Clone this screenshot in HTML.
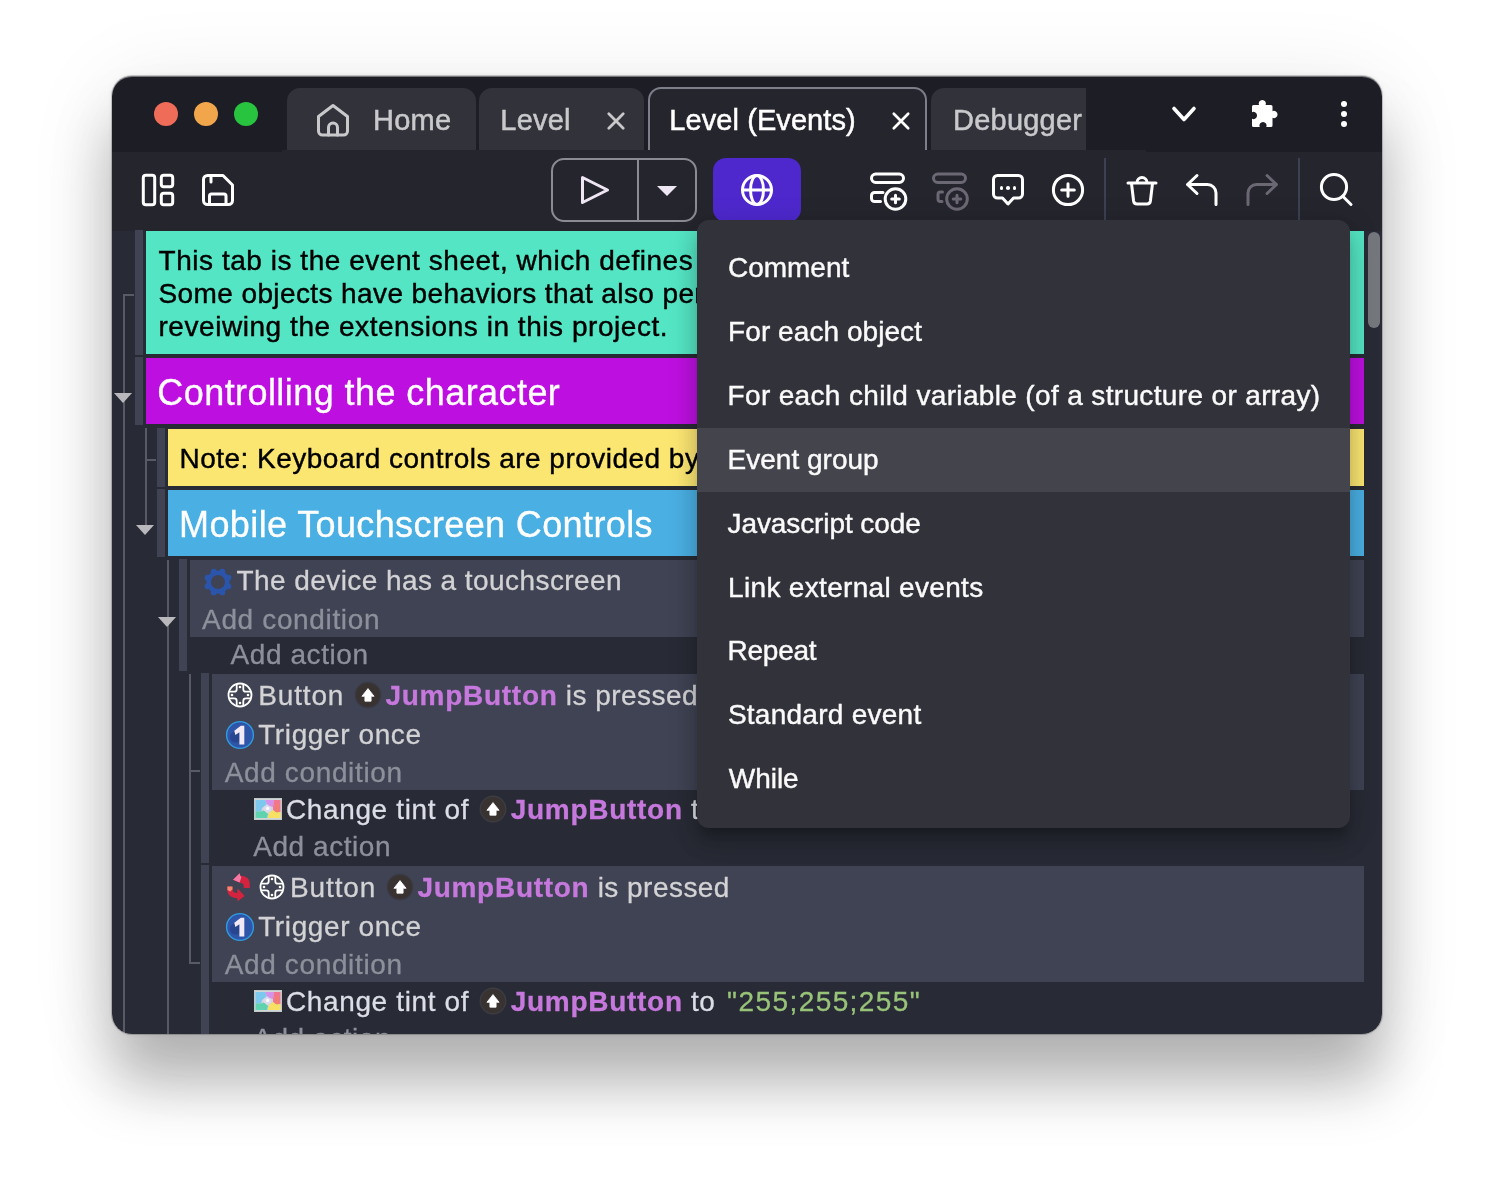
<!DOCTYPE html>
<html><head><meta charset="utf-8"><title>GDevelop</title>
<style>
*{box-sizing:border-box;margin:0;padding:0}
html,body{width:1494px;height:1182px;background:#fff;overflow:hidden}
body{font-family:"Liberation Sans",sans-serif;position:relative}
.shadow{position:absolute;left:112px;top:76px;width:1270px;height:958px;border-radius:20px;
 box-shadow:0 0 0 1px rgba(0,0,0,.18),0 50px 60px rgba(0,0,0,.27),0 10px 90px rgba(0,0,0,.09),0 0 5px rgba(0,0,0,.08)}
.win{position:absolute;left:0;top:0;width:1494px;height:1182px;clip-path:inset(76px 112px 148px 112px round 20px);background:#282b35}
.win{will-change:transform}
.win div,.win svg{position:absolute}
.t,.tt{-webkit-text-stroke:.3px currentColor}
.mi{-webkit-text-stroke:.42px currentColor}
.tt{-webkit-text-stroke:.5px currentColor}
.tab{background:#32323b;border-radius:13px 13px 0 0;color:#c9c9cc}
.tab.active{background:#25252e;border:2px solid #7c7e89;border-bottom:none;color:#fff}
.tt{font-size:28px;line-height:40px;height:40px;white-space:nowrap;color:#c8c8cb;letter-spacing:.2px}
.light{width:24px;height:24px;border-radius:50%}
.handle{background:#3f4354;width:8px}
.vl{background:#585b66;width:1.5px}
.hl{background:#585b66;height:1.5px}
.tri{width:0;height:0;border-left:9.5px solid transparent;border-right:9.5px solid transparent;border-top:10px solid #b9b9bd}
.t{white-space:nowrap;font-size:28px;letter-spacing:.46px;line-height:34px;height:34px;color:#d3d3d5}
.t.dim{color:#8d909b}
.t b{color:#c678dd;font-weight:bold;letter-spacing:.72px}
.t .str{color:#98c379;letter-spacing:1.42px;margin-left:3.6px}
.cond{background:#3f4353}
.menu{background:#32323b;border-radius:12px;box-shadow:0 10px 10px -6px rgba(0,0,0,.2),0 16px 20px 2px rgba(0,0,0,.14),0 6px 28px 4px rgba(0,0,0,.12)}
.mi{height:64px;line-height:64px;font-size:28px;color:#fafafa;white-space:nowrap}
.mi.hov{background:#44444d}
</style></head><body>
<div class="shadow"></div>
<div class="win">
<div class="" style="left:112px;top:76px;width:1270px;height:75.5px;background:#1d1d26"></div>
<div class="" style="left:112px;top:151.5px;width:1270px;height:79px;background:#25252e"></div>
<div class="" style="left:282px;top:149.8px;width:864px;height:2.2px;background:#25252e"></div>
<div class="light" style="left:154px;top:102px;width:24px;height:24px;background:#ee6c58"></div>
<div class="light" style="left:194px;top:102px;width:24px;height:24px;background:#f2a64b"></div>
<div class="light" style="left:234px;top:102px;width:24px;height:24px;background:#28c43f"></div>
<div class="tab" style="left:287px;top:88px;width:188.5px;height:62px;"></div>
<svg style="left:314px;top:101px" width="38" height="38" viewBox="0 0 38 38" fill="none" stroke="#c9c9cc" stroke-width="3" stroke-linejoin="round" stroke-linecap="round"><path d="M4.5 15.5 L19 4.5 L33.5 15.5 V30 a4 4 0 0 1 -4 4 H8.5 a4 4 0 0 1 -4 -4 Z"/><path d="M14.5 34 V26.5 a4.5 4.5 0 0 1 9 0 V34"/></svg>
<div class="tt" style="left:373.1px;top:99.7515px;font-size:29px;color:#c9c9cc">Home</div>
<div class="tab" style="left:479px;top:88px;width:164.5px;height:62px;"></div>
<div class="tt" style="left:500.3px;top:99.7515px;font-size:29px;color:#c9c9cc">Level</div>
<svg style="left:606px;top:111px" width="20" height="20" viewBox="0 0 20 20" stroke="#c9c9cc" stroke-width="2.7" stroke-linecap="round"><path d="M2.8 2.8 L17.2 17.2 M17.2 2.8 L2.8 17.2"/></svg>
<div class="tab active" style="left:647.5px;top:87.4px;width:279.5px;height:62.8px;"></div>
<div class="tt" style="left:669.3px;top:99.7515px;font-size:29px;color:#fff;letter-spacing:.08px">Level (Events)</div>
<svg style="left:891px;top:110.5px" width="20" height="20" viewBox="0 0 20 20" stroke="#fff" stroke-width="2.7" stroke-linecap="round"><path d="M2.8 2.8 L17.2 17.2 M17.2 2.8 L2.8 17.2"/></svg>
<div class="tab" style="left:931px;top:88px;width:155px;height:62px;border-radius:13px 0 0 0"></div>
<div class="" style="left:953.1px;top:88px;width:132.9px;height:62px;overflow:hidden"><div class="tt" style="left:0;top:11.7515px;font-size:29px;color:#c9c9cc">Debugger</div></div>
<svg style="left:1168px;top:100px" width="32" height="28" viewBox="0 0 32 28" fill="none" stroke="#fff" stroke-width="3.6" stroke-linecap="round" stroke-linejoin="round"><path d="M6 8.5 L16 19.5 L26 8.5"/></svg>
<svg style="left:1248px;top:97px" width="32" height="32" viewBox="0 0 32 32" fill="#fff"><path d="M4 9.5 a1.5 1.5 0 0 1 1.5 -1.5 H11 a3.6 3.6 0 1 1 6.6 0 H23 a1.5 1.5 0 0 1 1.5 1.5 V14.2 a3.6 3.6 0 1 1 0 6.6 V28.5 a1.5 1.5 0 0 1 -1.5 1.5 H18.3 a3.6 3.6 0 1 0 -6.6 0 H5.5 a1.5 1.5 0 0 1 -1.5 -1.5 V21.8 a3.6 3.6 0 1 0 0 -6.6 Z"/></svg>
<div class="" style="left:1340.7px;top:100.7px;width:6.6px;height:6.6px;background:#fff;border-radius:50%"></div>
<div class="" style="left:1340.7px;top:110.7px;width:6.6px;height:6.6px;background:#fff;border-radius:50%"></div>
<div class="" style="left:1340.7px;top:120.7px;width:6.6px;height:6.6px;background:#fff;border-radius:50%"></div>
<svg style="left:140px;top:172px" width="36" height="36" viewBox="0 0 36 36" fill="none" stroke="#ffffff" stroke-width="3" stroke-linecap="round" stroke-linejoin="round" ><rect x="3.3" y="3.3" width="11.4" height="29.4" rx="2.5"/><rect x="21.3" y="3.3" width="11.4" height="11.4" rx="2.5"/><rect x="21.3" y="21.3" width="11.4" height="11.4" rx="2.5"/></svg>
<svg style="left:200px;top:172px" width="36" height="36" viewBox="0 0 36 36" fill="none" stroke="#ffffff" stroke-width="3" stroke-linecap="round" stroke-linejoin="round" ><path d="M7.5 3.5 H23 L32.5 13 V28.5 a4 4 0 0 1 -4 4 H7.5 a4 4 0 0 1 -4 -4 V7.5 a4 4 0 0 1 4 -4 Z"/><path d="M11 4 V10"/><path d="M9.5 32 V24 a2 2 0 0 1 2 -2 H24 a2 2 0 0 1 2 2 V32"/></svg>
<div class="" style="left:551px;top:158px;width:146px;height:64px;border:2px solid #8b8b93;border-radius:13px"></div>
<div class="" style="left:637.2px;top:158px;width:1.8px;height:64px;background:#8b8b93"></div>
<svg style="left:576px;top:170px" width="40" height="40" viewBox="0 0 40 40" fill="none" stroke="#efe6f4" stroke-width="3" stroke-linecap="round" stroke-linejoin="round" stroke-linejoin="miter"><path d="M6.5 7.5 L31.5 20 L6.5 32.5 Z"/></svg>
<svg style="left:655px;top:184px" width="24" height="14" viewBox="0 0 24 14"><path d="M2 2 H22 L12 12 Z" fill="#efe6f4"/></svg>
<div class="" style="left:713px;top:158px;width:88px;height:64px;background:#4e28cd;border-radius:13px"></div>
<svg style="left:737px;top:170px" width="40" height="40" viewBox="0 0 40 40" fill="none" stroke="#ffffff" stroke-width="3" stroke-linecap="round" stroke-linejoin="round" ><circle cx="20" cy="20" r="14.5"/><ellipse cx="20" cy="20" rx="6.5" ry="14.5"/><path d="M5.5 20 H34.5"/></svg>
<svg style="left:868px;top:168px" width="44" height="46" viewBox="0 0 44 46" fill="none" stroke="#ffffff" stroke-width="3" stroke-linecap="round" stroke-linejoin="round" ><rect x="3.5" y="6" width="32" height="8.5" rx="4.25"/><path d="M15 24.5 H6.5 a3 3 0 0 0 -3 3 V30.5 a3 3 0 0 0 3 3 H12.5"/><circle cx="27.5" cy="31" r="10.3"/><path d="M27.5 27.2 V34.8 M23.7 31 H31.3"/></svg>
<svg style="left:930.3px;top:168px" width="44" height="46" viewBox="0 0 44 46" fill="none" stroke="#6b6874" stroke-width="3" stroke-linecap="round" stroke-linejoin="round" ><rect x="3.5" y="6" width="32" height="8.5" rx="4.25"/><path d="M12.5 24 H10.5 a2.5 2.5 0 0 0 -2.5 2.5 V31 a2.5 2.5 0 0 0 2.5 2.5 H12"/><circle cx="27" cy="31" r="10.3"/><path d="M27 27.2 V34.8 M23.2 31 H30.8"/></svg>
<svg style="left:990px;top:170px" width="38" height="40" viewBox="0 0 38 40" fill="none" stroke="#ffffff" stroke-width="3" stroke-linecap="round" stroke-linejoin="round" ><path d="M7.5 5.5 H28.5 a4 4 0 0 1 4 4 V24 a4 4 0 0 1 -4 4 H23.5 L18 34 L12.5 28 H7.5 a4 4 0 0 1 -4 -4 V9.5 a4 4 0 0 1 4 -4 Z"/></svg>
<div class="" style="left:999.8px;top:186px;width:3.6px;height:3.6px;background:#fff;border-radius:50%"></div>
<div class="" style="left:1006.2px;top:186px;width:3.6px;height:3.6px;background:#fff;border-radius:50%"></div>
<div class="" style="left:1012.5px;top:186px;width:3.6px;height:3.6px;background:#fff;border-radius:50%"></div>
<svg style="left:1048px;top:170px" width="40" height="40" viewBox="0 0 40 40" fill="none" stroke="#ffffff" stroke-width="3" stroke-linecap="round" stroke-linejoin="round" ><circle cx="20" cy="20" r="14.6"/><path d="M20 13.7 V26.3 M13.7 20 H26.3"/></svg>
<div class="" style="left:1104px;top:158px;width:2px;height:62px;background:#3b4052"></div>
<div class="" style="left:1298px;top:158px;width:2px;height:62px;background:#3b4052"></div>
<svg style="left:1122px;top:170px" width="40" height="40" viewBox="0 0 40 40" fill="none" stroke="#ffffff" stroke-width="3" stroke-linecap="round" stroke-linejoin="round" ><path d="M6 13 H34"/><path d="M15 12.5 a5 5 0 0 1 10 0"/><path d="M9.5 13.5 L11.6 31 a3.5 3.5 0 0 0 3.5 3 H24.9 a3.5 3.5 0 0 0 3.5 -3 L30.5 13.5"/></svg>
<svg style="left:1182px;top:170px" width="40" height="40" viewBox="0 0 40 40" fill="none" stroke="#ffffff" stroke-width="3" stroke-linecap="round" stroke-linejoin="round" ><path d="M15 5.5 L5.5 14.5 L15 23.5"/><path d="M6 14.5 H25.5 a8.5 8.5 0 0 1 8.5 8.5 V34.5"/></svg>
<svg style="left:1242px;top:170px" width="40" height="40" viewBox="0 0 40 40" fill="none" stroke="#6b6874" stroke-width="3" stroke-linecap="round" stroke-linejoin="round" ><path d="M25 5.5 L34.5 14.5 L25 23.5"/><path d="M34 14.5 H14.5 a8.5 8.5 0 0 0 -8.5 8.5 V34.5"/></svg>
<svg style="left:1316px;top:170px" width="40" height="40" viewBox="0 0 40 40" fill="none" stroke="#ffffff" stroke-width="3" stroke-linecap="round" stroke-linejoin="round" ><circle cx="18" cy="17" r="12.6"/><path d="M27 26.5 L35 34.5"/></svg>
<div class="vl" style="left:123.2px;top:294.3px;width:1.8px;height:745.7px;"></div>
<div class="hl" style="left:123.2px;top:294.2px;width:10.8px;height:1.8px;"></div>
<div class="vl" style="left:145.2px;top:428px;width:1.8px;height:98px;"></div>
<div class="hl" style="left:145.2px;top:459.1px;width:10.8px;height:1.8px;"></div>
<div class="vl" style="left:167px;top:560px;width:2px;height:480px;"></div>
<div class="vl" style="left:189.1px;top:674px;width:1.9px;height:289.8px;"></div>
<div class="hl" style="left:189.1px;top:770.2px;width:10.7px;height:1.8px;"></div>
<div class="hl" style="left:189.1px;top:962px;width:10.7px;height:1.8px;"></div>
<div class="tri" style="left:114.1px;top:392.8px;width:19px;height:10px;width:0;height:0"></div>
<div class="tri" style="left:136.3px;top:525.4px;width:19px;height:10px;width:0;height:0"></div>
<div class="tri" style="left:158.3px;top:617.1px;width:19px;height:10px;width:0;height:0"></div>
<div class="handle" style="left:135px;top:230px;width:8px;height:125px;"></div>
<div class="handle" style="left:135px;top:357px;width:8px;height:68px;"></div>
<div class="handle" style="left:157px;top:428px;width:8px;height:59px;"></div>
<div class="handle" style="left:157px;top:489px;width:8px;height:68px;"></div>
<div class="handle" style="left:179px;top:559px;width:8px;height:111.6px;"></div>
<div class="handle" style="left:201px;top:673px;width:8px;height:190.1px;"></div>
<div class="handle" style="left:201px;top:865.1px;width:8px;height:174.9px;"></div>
<div class="" style="left:146px;top:230.8px;width:1218px;height:123.3px;background:#54e5c4"></div>
<div class="t" style="left:158.5px;top:243.598px;letter-spacing:.54px;color:#000;-webkit-text-stroke:.42px #000">This tab is the event sheet, which defines how the game works.</div>
<div class="t" style="left:158.5px;top:276.598px;letter-spacing:.40px;color:#000;-webkit-text-stroke:.42px #000">Some objects have behaviors that also perform logic.  Learn more by</div>
<div class="t" style="left:158.5px;top:309.598px;letter-spacing:.55px;color:#000;-webkit-text-stroke:.42px #000">reveiwing the extensions in this project.</div>
<div class="" style="left:146px;top:357.9px;width:1218px;height:66.2px;background:#bd10e0"></div>
<div class="t" style="left:157.3px;top:371.026px;color:#fff;font-size:36px;line-height:44px;height:44px;letter-spacing:.43px">Controlling the character</div>
<div class="" style="left:168px;top:428.8px;width:1196px;height:57.2px;background:#fbe672"></div>
<div class="t" style="left:179.5px;top:441.598px;letter-spacing:.48px;color:#000;-webkit-text-stroke:.42px #000">Note: Keyboard controls are provided by the platformer character behavior.</div>
<div class="" style="left:168px;top:490px;width:1196px;height:65.9px;background:#4aafe3"></div>
<div class="t" style="left:179.1px;top:503.026px;color:#fff;font-size:36px;line-height:44px;height:44px;letter-spacing:.38px">Mobile Touchscreen Controls</div>
<div class="cond" style="left:190px;top:560.2px;width:1174px;height:76.6px;"></div>
<div class="t" style="left:236.5px;top:564.498px;letter-spacing:.43px;">The device has a touchscreen</div>
<div class="t dim" style="left:202.1px;top:602.598px;letter-spacing:.64px;">Add condition</div>
<div class="t dim" style="left:230.6px;top:637.898px;letter-spacing:.56px;">Add action</div>
<svg style="left:203.1px;top:567px" width="30" height="30" viewBox="0 0 30 30"><g fill="#2b55ab"><circle cx="15" cy="15" r="11.6"/><circle cx="19.32" cy="4.56" r="2.9"/><circle cx="25.44" cy="10.68" r="2.9"/><circle cx="25.44" cy="19.32" r="2.9"/><circle cx="19.32" cy="25.44" r="2.9"/><circle cx="10.68" cy="25.44" r="2.9"/><circle cx="4.56" cy="19.32" r="2.9"/><circle cx="4.56" cy="10.68" r="2.9"/><circle cx="10.68" cy="4.56" r="2.9"/></g><circle cx="15" cy="15" r="7" fill="#3f4353"/></svg>
<div class="cond" style="left:212px;top:674.1px;width:1152px;height:115.7px;"></div>
<svg style="left:227px;top:682px" width="26" height="26" viewBox="0 0 26 26" fill="none" stroke="#fff" stroke-width="1.8"><circle cx="13" cy="13" r="11.5"/><path d="M9.7 2 V7.2 a2.5 2.5 0 0 1 -2.5 2.5 H2 M16.3 2 V7.2 a2.5 2.5 0 0 0 2.5 2.5 H24 M9.7 24 V18.8 a2.5 2.5 0 0 0 -2.5 -2.5 H2 M16.3 24 V18.8 a2.5 2.5 0 0 1 2.5 -2.5 H24"/><g fill="#fff" stroke="none"><circle cx="13" cy="5" r="1.3"/><circle cx="13" cy="21" r="1.3"/><circle cx="5" cy="13" r="1.3"/><circle cx="21" cy="13" r="1.3"/></g></svg>
<div class="t" style="left:258.2px;top:678.998px;letter-spacing:.85px;">Button</div>
<svg style="left:354px;top:681px" width="28" height="28" viewBox="0 0 28 28"><circle cx="14" cy="14" r="13.4" fill="#3a3b47"/><circle cx="14" cy="14" r="12" fill="#383231"/><path d="M14 7.6 L20.1 15.3 H17.1 V20.2 H10.9 V15.3 H7.9 Z" fill="#fff" stroke="#fff" stroke-width="0.8" stroke-linejoin="round"/></svg>
<div class="t" style="left:385.5px;top:678.998px;letter-spacing:.46px;"><b>JumpButton</b> is pressed</div>
<svg style="left:225px;top:719.9px" width="30" height="30" viewBox="0 0 30 30"><circle cx="15" cy="15" r="13.4" fill="#2f55a8" stroke="#2f9be0" stroke-width="1.4"/><circle cx="10.5" cy="17" r="5.5" fill="#27468f"/><path d="M9.3 10.8 L15.8 5.8 H19.3 V24.5 H14.4 V12.2 L10.3 15 Z" fill="#f1e9f5"/></svg>
<div class="t" style="left:258.2px;top:717.898px;letter-spacing:.61px;">Trigger once</div>
<div class="t dim" style="left:224.7px;top:755.898px;letter-spacing:.64px;">Add condition</div>
<svg style="left:253.9px;top:798px" width="28" height="22" viewBox="0 0 28 22"><rect x="0" y="0" width="28" height="22" fill="#c3c8c9"/><rect x="1" y="1" width="26" height="20" fill="#d0d5d6"/><path d="M1.5 2 H11 L13 6 L8 10 L7 13.5 H1.5 Z" fill="#7cc8ef"/><path d="M11 2 H20 L19 9 L15 8 L13 6 Z" fill="#d592ea"/><path d="M20 2 H26.5 V14 L22 14.5 L19 12 L19 9 Z" fill="#f2768f"/><path d="M23 6 H24.2 V17 H23 Z" fill="#f08a3c"/><path d="M1.5 13.5 H7 L10 12.5 L14 16 L13 20 H1.5 Z" fill="#5fd3ae"/><path d="M15 15 L19 12 L22 14.5 L26.5 14 V20 H14 Z" fill="#f6e163"/><path d="M9 10 L13 6.5 L17 9 L17 13 L13 14.5 L10 12.5 Z" fill="#dcdaf0"/><circle cx="13.6" cy="10.4" r="1.6" fill="#fbfbff"/></svg>
<div class="t" style="left:285.9px;top:792.598px;letter-spacing:.64px;color:#dcdde6;">Change tint of</div>
<svg style="left:478.9px;top:794.6px" width="28" height="28" viewBox="0 0 28 28"><circle cx="14" cy="14" r="13.4" fill="#3d3c42"/><circle cx="14" cy="14" r="12" fill="#383231"/><path d="M14 7.6 L20.1 15.3 H17.1 V20.2 H10.9 V15.3 H7.9 Z" fill="#fff" stroke="#fff" stroke-width="0.8" stroke-linejoin="round"/></svg>
<div class="t" style="left:510.7px;top:792.598px;letter-spacing:.46px;color:#dcdde6;"><b>JumpButton</b> to <span class="str">"192;192;192"</span></div>
<div class="t dim" style="left:253.2px;top:829.798px;letter-spacing:.56px;">Add action</div>
<div class="cond" style="left:212px;top:866.1px;width:1152px;height:115.7px;"></div>
<svg style="left:227.3px;top:872.7px" width="24" height="30" viewBox="0 0 24 30"><path d="M12.6 0.2 L6 6.8 L13.6 9.9 C15.6 10 16.7 11 16.7 12.6 V14.9 H22.8 V10.5 C22.8 5.6 18.6 2.8 13.4 2.8 Z" fill="#d4233f"/><path d="M12.6 0.2 L6 6.8 L12.6 9.4 L14.4 4.2 L13.3 2.8 Z" fill="#f47aa5"/><path d="M0.4 13.4 H5.5 V16 C5.5 18.6 7.5 20 10.1 20 L10.6 15.4 L17.7 23.1 L10.6 28.3 L10.1 25.1 C4.5 25.1 0.4 22 0.4 17 Z" fill="#d4233f"/><path d="M0.4 13.4 H5.5 V16.6 L3.2 18.6 L0.4 17 Z" fill="#f5866c"/></svg>
<svg style="left:258.9px;top:874px" width="26" height="26" viewBox="0 0 26 26" fill="none" stroke="#fff" stroke-width="1.8"><circle cx="13" cy="13" r="11.5"/><path d="M9.7 2 V7.2 a2.5 2.5 0 0 1 -2.5 2.5 H2 M16.3 2 V7.2 a2.5 2.5 0 0 0 2.5 2.5 H24 M9.7 24 V18.8 a2.5 2.5 0 0 0 -2.5 -2.5 H2 M16.3 24 V18.8 a2.5 2.5 0 0 1 2.5 -2.5 H24"/><g fill="#fff" stroke="none"><circle cx="13" cy="5" r="1.3"/><circle cx="13" cy="21" r="1.3"/><circle cx="5" cy="13" r="1.3"/><circle cx="21" cy="13" r="1.3"/></g></svg>
<div class="t" style="left:290.1px;top:870.998px;letter-spacing:.85px;">Button</div>
<svg style="left:385.9px;top:873px" width="28" height="28" viewBox="0 0 28 28"><circle cx="14" cy="14" r="13.4" fill="#3a3b47"/><circle cx="14" cy="14" r="12" fill="#383231"/><path d="M14 7.6 L20.1 15.3 H17.1 V20.2 H10.9 V15.3 H7.9 Z" fill="#fff" stroke="#fff" stroke-width="0.8" stroke-linejoin="round"/></svg>
<div class="t" style="left:417.4px;top:870.998px;letter-spacing:.46px;"><b>JumpButton</b> is pressed</div>
<svg style="left:225px;top:911.9px" width="30" height="30" viewBox="0 0 30 30"><circle cx="15" cy="15" r="13.4" fill="#2f55a8" stroke="#2f9be0" stroke-width="1.4"/><circle cx="10.5" cy="17" r="5.5" fill="#27468f"/><path d="M9.3 10.8 L15.8 5.8 H19.3 V24.5 H14.4 V12.2 L10.3 15 Z" fill="#f1e9f5"/></svg>
<div class="t" style="left:258.2px;top:909.898px;letter-spacing:.61px;">Trigger once</div>
<div class="t dim" style="left:224.7px;top:947.898px;letter-spacing:.64px;">Add condition</div>
<svg style="left:253.9px;top:990px" width="28" height="22" viewBox="0 0 28 22"><rect x="0" y="0" width="28" height="22" fill="#c3c8c9"/><rect x="1" y="1" width="26" height="20" fill="#d0d5d6"/><path d="M1.5 2 H11 L13 6 L8 10 L7 13.5 H1.5 Z" fill="#7cc8ef"/><path d="M11 2 H20 L19 9 L15 8 L13 6 Z" fill="#d592ea"/><path d="M20 2 H26.5 V14 L22 14.5 L19 12 L19 9 Z" fill="#f2768f"/><path d="M23 6 H24.2 V17 H23 Z" fill="#f08a3c"/><path d="M1.5 13.5 H7 L10 12.5 L14 16 L13 20 H1.5 Z" fill="#5fd3ae"/><path d="M15 15 L19 12 L22 14.5 L26.5 14 V20 H14 Z" fill="#f6e163"/><path d="M9 10 L13 6.5 L17 9 L17 13 L13 14.5 L10 12.5 Z" fill="#dcdaf0"/><circle cx="13.6" cy="10.4" r="1.6" fill="#fbfbff"/></svg>
<div class="t" style="left:285.9px;top:984.598px;letter-spacing:.64px;color:#dcdde6;">Change tint of</div>
<svg style="left:478.9px;top:986.6px" width="28" height="28" viewBox="0 0 28 28"><circle cx="14" cy="14" r="13.4" fill="#3d3c42"/><circle cx="14" cy="14" r="12" fill="#383231"/><path d="M14 7.6 L20.1 15.3 H17.1 V20.2 H10.9 V15.3 H7.9 Z" fill="#fff" stroke="#fff" stroke-width="0.8" stroke-linejoin="round"/></svg>
<div class="t" style="left:510.7px;top:984.598px;letter-spacing:.46px;color:#dcdde6;"><b>JumpButton</b> to <span class="str">"255;255;255"</span></div>
<div class="t dim" style="left:253.2px;top:1021.8px;letter-spacing:.56px;">Add action</div>
<div class="" style="left:1364px;top:230.5px;width:18px;height:809.5px;background:#282b35"></div>
<div class="" style="left:1368px;top:232px;width:12px;height:96px;background:#74777c;border-radius:6px"></div>
<div class="menu" style="left:696.5px;top:220px;width:653.5px;height:608px;"></div>
<div class="mi" style="left:728px;top:236.098px;letter-spacing:-0.02px">Comment</div>
<div class="mi" style="left:728.1px;top:299.998px;letter-spacing:0.06px">For each object</div>
<div class="mi" style="left:727.5px;top:363.898px;letter-spacing:0.35px">For each child variable (of a structure or array)</div>
<div class="" style="left:696.5px;top:427.8px;width:653.5px;height:64px;background:#44444d"></div>
<div class="mi" style="left:727.5px;top:427.798px;letter-spacing:0.02px">Event group</div>
<div class="mi" style="left:727.5px;top:491.698px;letter-spacing:-0.09px">Javascript code</div>
<div class="mi" style="left:728.1px;top:555.598px;letter-spacing:0.32px">Link external events</div>
<div class="mi" style="left:727.5px;top:619.498px;letter-spacing:-0.24px">Repeat</div>
<div class="mi" style="left:727.9px;top:683.398px;letter-spacing:0.26px">Standard event</div>
<div class="mi" style="left:728.8px;top:747.298px;letter-spacing:-0.03px">While</div>
<div style="left:112px;top:76px;width:1270px;height:958px;border-radius:20px;box-shadow:inset 0 1px 0 0 rgba(255,255,255,.38);pointer-events:none"></div>
</div>
</body></html>
